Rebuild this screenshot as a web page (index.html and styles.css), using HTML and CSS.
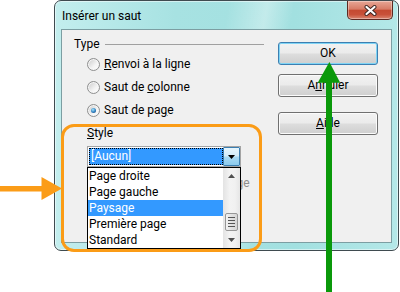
FILE: index.html
```html
<!DOCTYPE html>
<html lang="fr">
<head>
<meta charset="utf-8">
<link rel="stylesheet" href="styles.css">
</head>
<body>
<div class="window">
  <div class="titlebar">
    <span class="title">Insérer un saut</span>
    <span class="close">
      <svg width="13" height="11" viewBox="0 0 13 11"><path d="M2.5 2 L10.5 9 M10.5 2 L2.5 9" stroke="#3a2420" stroke-width="4" stroke-linecap="round"/><path d="M2.5 2 L10.5 9 M10.5 2 L2.5 9" stroke="#fff" stroke-width="2.2" stroke-linecap="round"/></svg>
    </span>
  </div>
  <div class="client">
    <div class="left">
      <div class="group-head"><span>Type</span><span class="rule"></span></div>
      <div class="radios">
        <div class="radio"><span class="rb"></span><span><u>R</u>envoi à la ligne</span></div>
        <div class="radio"><span class="rb"></span><span>Saut de <u>c</u>olonne</span></div>
        <div class="radio"><span class="rb on"></span><span>Saut de pa<u>g</u>e</span></div>
      </div>
      <div class="style-label"><u>S</u>tyle</div>
      <div class="combo">
        <div class="combo-field">[Aucun]</div>
        <div class="combo-btn"><svg width="7" height="4" viewBox="0 0 7 4"><path d="M0 0 H7 L3.5 4 Z" fill="#000"/></svg></div>
      </div>
      <div class="check"><span class="cb"></span><span>Modifier le numéro de page</span></div>
    </div>
    <div class="buttons">
      <div class="btn default">OK</div>
      <div class="btn">A<u>n</u>nuler</div>
      <div class="btn help"><u>A</u>ide</div>
    </div>
  </div>
</div>

<div class="popup">
  <ul class="items">
    <li>Page droite</li>
    <li>Page gauche</li>
    <li class="sel">Paysage</li>
    <li>Première page</li>
    <li>Standard</li>
  </ul>
  <div class="scroll">
    <div class="sbtn"><svg width="7" height="4" viewBox="0 0 7 4"><path d="M0 4 H7 L3.5 0 Z" fill="#505050"/></svg></div>
    <div class="track"><div class="thumb"><i></i><i></i><i></i><i></i></div></div>
    <div class="sbtn"><svg width="7" height="4" viewBox="0 0 7 4"><path d="M0 0 H7 L3.5 4 Z" fill="#505050"/></svg></div>
  </div>
</div>

<div class="highlight"></div>

<svg class="arrow-orange" width="64" height="26" viewBox="0 0 64 26">
  <rect x="0" y="10" width="43" height="5.5" fill="#fb9c17"/>
  <path d="M41.5 1 L62 12.5 L41.5 24 Z" fill="#fb9c17"/>
</svg>

<svg class="arrow-green" width="26" height="232" viewBox="0 0 26 232">
  <rect x="10" y="20" width="6" height="212" fill="#0a990a"/>
  <path d="M1.7 22.7 L13.4 2 L24.2 22.7 Z" fill="#0a990a"/>
</svg>
</body>
</html>
```

FILE: styles.css
```css
* { box-sizing: border-box; margin: 0; padding: 0; }
html, body { width: 400px; height: 292px; overflow: hidden; background: #fff; }
body {
  position: relative;
  font-family: Roboto, "Noto Sans", sans-serif;
  font-size: 12px;
  color: #000;
}
u { text-decoration: underline; text-underline-offset: 1px; }

.window {
  margin-left: 54px;
  width: 345px;
  height: 251px;
  border: 1px solid #3f4b50;
  border-radius: 7px;
  padding: 0 6px 7px;
  display: flex;
  flex-direction: column;
  background:
    linear-gradient(100deg, rgba(255,255,255,0) 45%, rgba(255,255,255,.35) 55%, rgba(255,255,255,0) 62%),
    linear-gradient(to right, #c3eeee 0%, #a7e2e2 35%, #a2e0e0 70%, #b4e8e8 100%);
  box-shadow: inset 0 0 0 1px rgba(255,255,255,.5);
}
.titlebar {
  height: 28px;
  display: flex;
  justify-content: space-between;
  align-items: flex-start;
}
.title {
  margin: 7px 0 0 1px;
  line-height: 16px;
}
.close {
  width: 46px;
  height: 19px;
  margin-right: -1px;
  border: 1px solid #5c2a22;
  border-top: none;
  border-radius: 0 0 5px 5px;
  background: linear-gradient(#e7a796 0%, #d77b66 45%, #c44a31 52%, #c85139 75%, #d98670 100%);
  box-shadow: inset 0 0 0 1px rgba(255,255,255,.35);
  display: flex;
  align-items: center;
  justify-content: center;
}

.client {
  height: 214px;
  border: 1px solid #7c9ea2;
  background: #f0f0f0;
  display: flex;
  gap: 14px;
  padding: 6px 13px 0 12px;
}
.left { width: 190px; display: flex; flex-direction: column; }
.group-head {
  height: 16px;
  display: flex;
  align-items: center;
  line-height: 16px;
}
.group-head .rule {
  flex: 1;
  height: 1px;
  background: #a0a0a0;
  margin-left: 5px;
}
.radios {
  margin-top: 4px;
  padding-left: 13px;
  display: flex;
  flex-direction: column;
  gap: 7px;
}
.radio {
  height: 16px;
  display: flex;
  align-items: center;
  gap: 4px;
  line-height: 16px;
  white-space: nowrap;
}
.rb {
  width: 13px;
  height: 13px;
  border-radius: 50%;
  border: 1px solid #8e8f8f;
  background: linear-gradient(135deg, #c9c9c9, #f4f4f4 60%, #ffffff);
  box-shadow: inset 0 0 0 1px #f6f6f6;
  position: relative;
  flex: none;
}
.rb.on::after {
  content: "";
  position: absolute;
  left: 3px;
  top: 3px;
  width: 5px;
  height: 5px;
  border-radius: 50%;
  background: radial-gradient(circle at 40% 35%, #a6e6fc 0, #2f7fc0 55%, #123f70 100%);
}
.style-label {
  margin-top: 7px;
  padding-left: 13px;
  line-height: 16px;
}
.combo {
  margin: 5px 0 0 13px;
  width: 154px;
  height: 21px;
  border: 1px solid #a4a4a4;
  background: #fff;
  display: flex;
}
.combo-field {
  flex: 1;
  margin: 1px 0 1px 1px;
  background: #3399ff;
  border: 1px dotted #000;
  color: #fff;
  line-height: 15px;
  padding-left: 1px;
}
.combo-btn {
  width: 17px;
  border: 1px solid #3c7fb1;
  border-radius: 1px;
  background: linear-gradient(#e6f5fd 0%, #d2ecfa 48%, #a9daf4 52%, #8ccbee 100%);
  display: flex;
  align-items: center;
  justify-content: center;
}
.check {
  margin-top: 8px;
  padding-left: 13px;
  height: 16px;
  display: flex;
  align-items: center;
  gap: 4px;
  color: #8d8d8d;
  white-space: nowrap;
}
.cb {
  width: 13px;
  height: 13px;
  border: 1px solid #b1b1b1;
  background: #f4f4f4;
  flex: none;
}

.buttons {
  width: 100px;
  margin-top: 6px;
  display: flex;
  flex-direction: column;
}
.btn {
  height: 23px;
  border: 1px solid #707070;
  border-radius: 3px;
  background: linear-gradient(#f2f2f2 0%, #ebebeb 48%, #dddddd 52%, #cfcfcf 100%);
  box-shadow: inset 0 0 0 1px #fbfbfb;
  line-height: 21px;
  text-align: center;
}
.btn.default {
  border-color: #3c7fb1;
  box-shadow: inset 0 0 0 1px #7fd4f5;
}
.btn + .btn { margin-top: 9px; }
.btn.help { margin-top: 15px; }

.popup {
  position: absolute;
  left: 87px;
  top: 167px;
  width: 154px;
  height: 82px;
  border: 1px solid #000;
  background: #fff;
  display: flex;
}
.items { flex: 1; list-style: none; }
.items li {
  height: 16px;
  line-height: 16px;
  padding-left: 1px;
  color: #000;
  white-space: nowrap;
}
.items li.sel { background: #3399ff; color: #fff; }
.scroll {
  width: 17px;
  display: flex;
  flex-direction: column;
  background: linear-gradient(to right, #e3e3e3, #f3f3f3 40%, #f1f1f1 70%, #e6e6e6);
}
.sbtn {
  height: 16px;
  display: flex;
  align-items: center;
  justify-content: center;
}
.track { flex: 1; }
.thumb {
  margin: 29px 0 0 2px;
  width: 13px;
  height: 18px;
  border: 1px solid #979797;
  border-radius: 2px;
  background: linear-gradient(to right, #f3f3f3, #e2e2e2 50%, #d6d6d6);
  display: flex;
  flex-direction: column;
  align-items: center;
  justify-content: center;
  gap: 2px;
}
.thumb i {
  display: block;
  width: 7px;
  height: 1px;
  background: #555;
}

.highlight {
  position: absolute;
  left: 61px;
  top: 124px;
  width: 201px;
  height: 128px;
  border: 3px solid #fb9c17;
  border-radius: 13px;
}
.arrow-orange { position: absolute; left: 0; top: 176px; }
.arrow-green { position: absolute; left: 316px; top: 60px; }
```
